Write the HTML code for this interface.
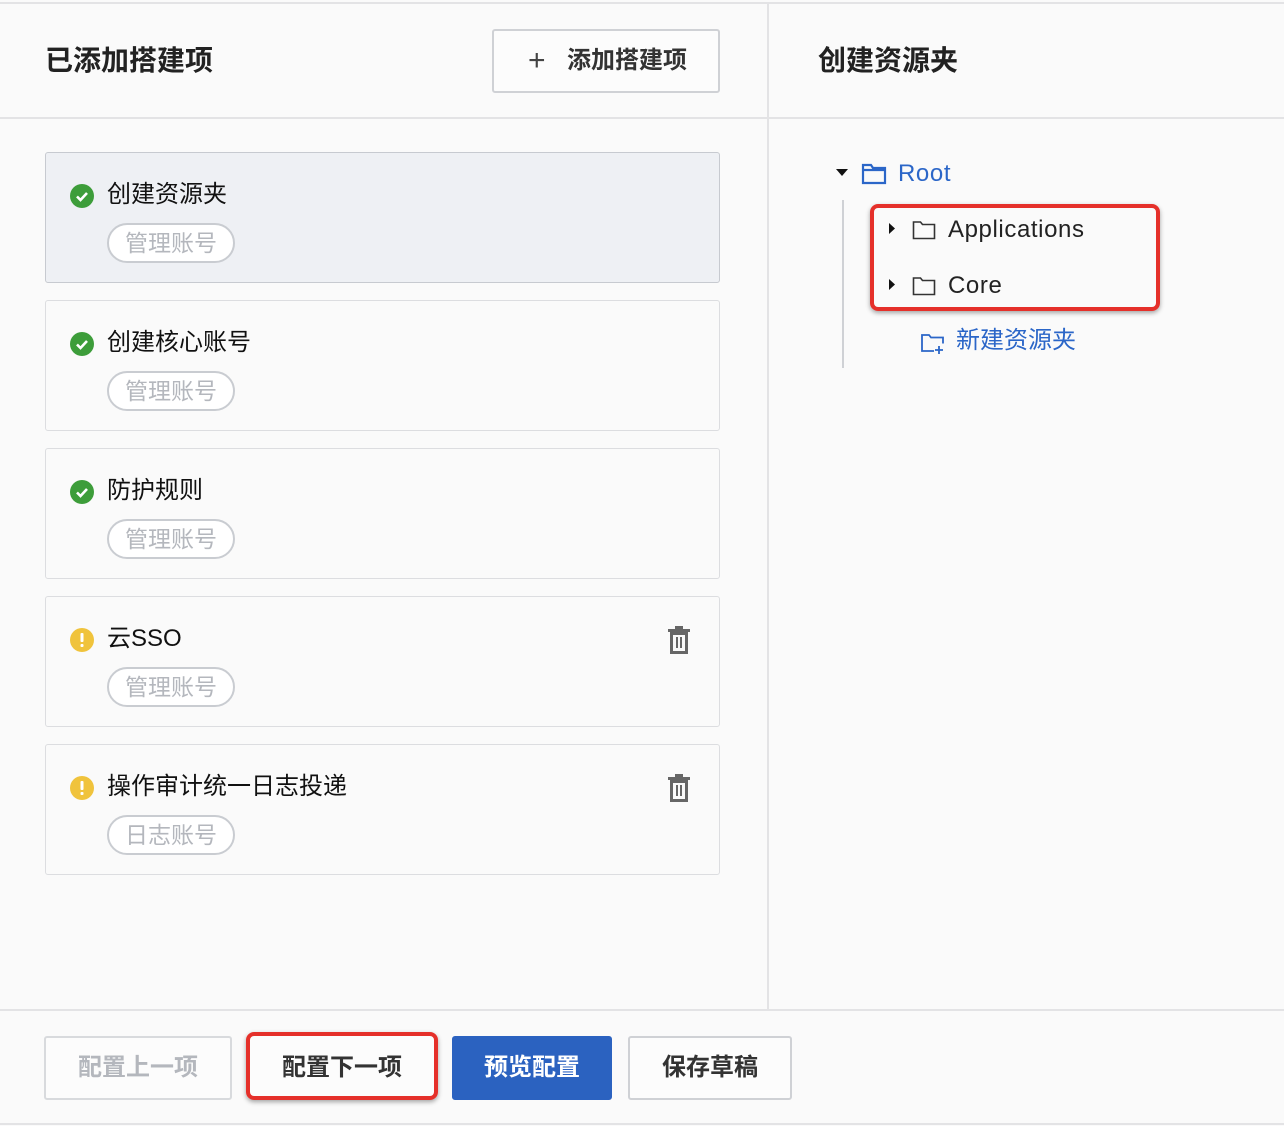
<!DOCTYPE html>
<html><head><meta charset="utf-8">
<style>
*{box-sizing:border-box;margin:0;padding:0}
body{width:1284px;height:1126px;background:#fafafa;font-family:"Liberation Sans","Noto Sans CJK SC",sans-serif;position:relative;overflow:hidden;color:#111}
.abs{position:absolute}
.hl{position:absolute;left:0;width:1284px;height:2px;background:#e3e3e5}
.title{font-size:28px;font-weight:bold;color:#222;line-height:30px}
.card{position:absolute;left:45px;width:675px;height:131px;border:1.5px solid #dcdde0;border-radius:3px;background:#fafafa}
.card.sel{background:#eef0f4;border-color:#c7cad0}
.card .ic{position:absolute;left:24px;top:31px;width:24px;height:24px;border-radius:50%}
.card .nm{position:absolute;left:61px;top:25px;font-size:24px;line-height:34px;color:#111}
.tag{position:absolute;left:61px;top:70px;height:40px;padding:0 16px;border:2px solid #c9ccd1;border-radius:20px;font-size:23px;line-height:36px;color:#b4b7bd;background:#fff}
.trash{position:absolute;right:28px;top:28px}
.btn{position:absolute;top:1036px;height:64px;border:2px solid #cfd1d5;border-radius:3px;font-size:24px;line-height:60px;text-align:center;background:#fcfcfc;font-weight:bold;color:#333}
.red{position:absolute;border:4px solid #e5302a;border-radius:8px;box-shadow:0 2px 5px rgba(0,0,0,.35)}
.tr{font-size:24px;line-height:30px;letter-spacing:0.6px}
</style></head><body>
<div class="hl" style="top:2px"></div>
<div class="hl" style="top:117px"></div>
<div class="hl" style="top:1009px"></div>
<div class="hl" style="top:1123px"></div>
<div class="abs" style="left:767px;top:2px;width:2px;height:1008px;background:#e3e3e5"></div>

<div class="abs title" style="left:45px;top:46px">已添加搭建项</div>
<div class="abs" style="left:492px;top:29px;width:228px;height:64px;border:2px solid #cfd1d5;border-radius:3px;background:#fcfcfc;font-size:24px;line-height:60px;color:#333;font-weight:bold">
<span style="position:absolute;left:34px;top:0;font-weight:normal;font-size:30px;color:#444">+</span>
<span style="position:absolute;left:73px">添加搭建项</span></div>
<div class="abs title" style="left:818px;top:46px">创建资源夹</div>

<div class="card sel" style="top:152px"><div class="ic" style="background:#3d9d3a"><svg width="24" height="24"><path d="M7 12.5l3.5 3.5 6.5-7" stroke="#fff" stroke-width="2.6" fill="none"/></svg></div><div class="nm">创建资源夹</div><div class="tag">管理账号</div></div>
<div class="card" style="top:300px"><div class="ic" style="background:#3d9d3a"><svg width="24" height="24"><path d="M7 12.5l3.5 3.5 6.5-7" stroke="#fff" stroke-width="2.6" fill="none"/></svg></div><div class="nm">创建核心账号</div><div class="tag">管理账号</div></div>
<div class="card" style="top:448px"><div class="ic" style="background:#3d9d3a"><svg width="24" height="24"><path d="M7 12.5l3.5 3.5 6.5-7" stroke="#fff" stroke-width="2.6" fill="none"/></svg></div><div class="nm">防护规则</div><div class="tag">管理账号</div></div>
<div class="card" style="top:596px"><div class="ic" style="background:#f0c33c"><svg width="24" height="24"><rect x="10.5" y="5" width="3" height="9" rx="1" fill="#fff"/><rect x="10.5" y="16" width="3" height="3" rx="1" fill="#fff"/></svg></div><div class="nm">云SSO</div><div class="tag">管理账号</div>
<svg class="trash" width="24" height="30"><rect x="8" y="1" width="8" height="3" fill="#666"/><rect x="1" y="4" width="22" height="3" fill="#666"/><rect x="4.5" y="8.5" width="15" height="19" fill="none" stroke="#666" stroke-width="3"/><rect x="9" y="12" width="2" height="11" fill="#666"/><rect x="13" y="12" width="2" height="11" fill="#666"/></svg></div>
<div class="card" style="top:744px"><div class="ic" style="background:#f0c33c"><svg width="24" height="24"><rect x="10.5" y="5" width="3" height="9" rx="1" fill="#fff"/><rect x="10.5" y="16" width="3" height="3" rx="1" fill="#fff"/></svg></div><div class="nm">操作审计统一日志投递</div><div class="tag">日志账号</div>
<svg class="trash" width="24" height="30"><rect x="8" y="1" width="8" height="3" fill="#666"/><rect x="1" y="4" width="22" height="3" fill="#666"/><rect x="4.5" y="8.5" width="15" height="19" fill="none" stroke="#666" stroke-width="3"/><rect x="9" y="12" width="2" height="11" fill="#666"/><rect x="13" y="12" width="2" height="11" fill="#666"/></svg></div>

<svg class="abs" style="left:836px;top:168px" width="14" height="10"><path d="M0 1h12l-6 7z" fill="#111"/></svg>
<svg class="abs" style="left:861px;top:162px" width="26" height="24"><path d="M2 3h8l2 3h12v15H2z M2 8h22" fill="none" stroke="#2b66c8" stroke-width="2.2"/></svg>
<div class="abs tr" style="left:898px;top:159px;color:#2b66c8">Root</div>
<div class="abs" style="left:842px;top:200px;width:2px;height:168px;background:#cfd1d5"></div>
<svg class="abs" style="left:888px;top:222px" width="8" height="14"><path d="M1 1v11l6-5.5z" fill="#111"/></svg>
<svg class="abs" style="left:912px;top:220px" width="24" height="20"><path d="M1.5 2h7l2 2.5h12v14H1.5z" fill="none" stroke="#333" stroke-width="1.6"/></svg>
<div class="abs tr" style="left:948px;top:215px;color:#222">Applications</div>
<svg class="abs" style="left:888px;top:278px" width="8" height="14"><path d="M1 1v11l6-5.5z" fill="#111"/></svg>
<svg class="abs" style="left:912px;top:276px" width="24" height="20"><path d="M1.5 2h7l2 2.5h12v14H1.5z" fill="none" stroke="#333" stroke-width="1.6"/></svg>
<div class="abs tr" style="left:948px;top:271px;color:#222">Core</div>
<div class="red" style="left:870px;top:204px;width:290px;height:107px"></div>
<svg class="abs" style="left:920px;top:332px" width="26" height="22"><path d="M14 19H2V3h7l2 2.5h12v6 M19 14v8 M15 18h8" fill="none" stroke="#2b66c8" stroke-width="1.8"/></svg>
<div class="abs" style="left:956px;top:326px;font-size:24px;color:#2b66c8;line-height:30px">新建资源夹</div>

<div class="btn" style="left:44px;width:188px;color:#b4b7bd;border-color:#d8dadd">配置上一项</div>
<div class="btn" style="left:250px;width:184px;border-color:#fcfcfc">配置下一项</div>
<div class="red" style="left:246px;top:1032px;width:192px;height:68px"></div>
<div class="btn" style="left:452px;width:160px;background:#2b62c0;border-color:#2b62c0;color:#fff">预览配置</div>
<div class="btn" style="left:628px;width:164px">保存草稿</div>
</body></html>
